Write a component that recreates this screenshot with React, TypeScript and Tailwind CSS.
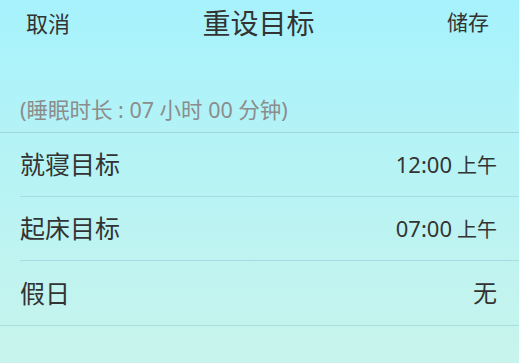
export default function App() {
  const rows = [
    { label: '就寝目标', time: '12:00', suffix: '上午' },
    { label: '起床目标', time: '07:00', suffix: '上午' },
    { label: '假日', time: '', suffix: '无' },
  ]

  return (
    <div
      className="w-[519px] h-[363px] overflow-hidden bg-gradient-to-b from-[#a6f2fc] to-[#c8f4ec] text-[#333333]"
      style={{ fontFamily: '"Noto Sans", "Noto Sans CJK SC", sans-serif' }}
    >
      {/* header */}
      <div className="h-[45px] flex items-center justify-between pl-[26px] pr-[30px]">
        <span className="text-[22px] leading-none">取消</span>
        <span className="text-[28px] leading-none">重设目标</span>
        <span className="text-[21px] leading-none">储存</span>
      </div>

      {/* duration */}
      <div className="h-[87px] flex items-end pb-[12px] px-[20px]">
        <span className="text-[21.5px] leading-none text-[#8c8c8c]">(睡眠时长 : 07 小时 00 分钟)</span>
      </div>

      {/* rows */}
      <div className="border-t border-[#9ad6de]">
        {rows.map((row, i) => (
          <div key={row.label} className={i < rows.length - 1 ? 'pl-[20px]' : ''}>
            <div
              className={`h-[64px] flex items-center justify-between pr-[22px] ${
                i < rows.length - 1 ? 'border-b border-[#a6dde2]' : 'pl-[20px]'
              }`}
            >
              <span className="text-[25px] leading-none">{row.label}</span>
              <span className="flex items-baseline gap-[5px] leading-none">
                {row.time && <span className="text-[22px]">{row.time}</span>}
                <span className={row.time ? 'text-[20px]' : 'text-[24px]'}>{row.suffix}</span>
              </span>
            </div>
          </div>
        ))}
        <div className="border-t border-[#a8dfe0]" />
      </div>
    </div>
  )
}
